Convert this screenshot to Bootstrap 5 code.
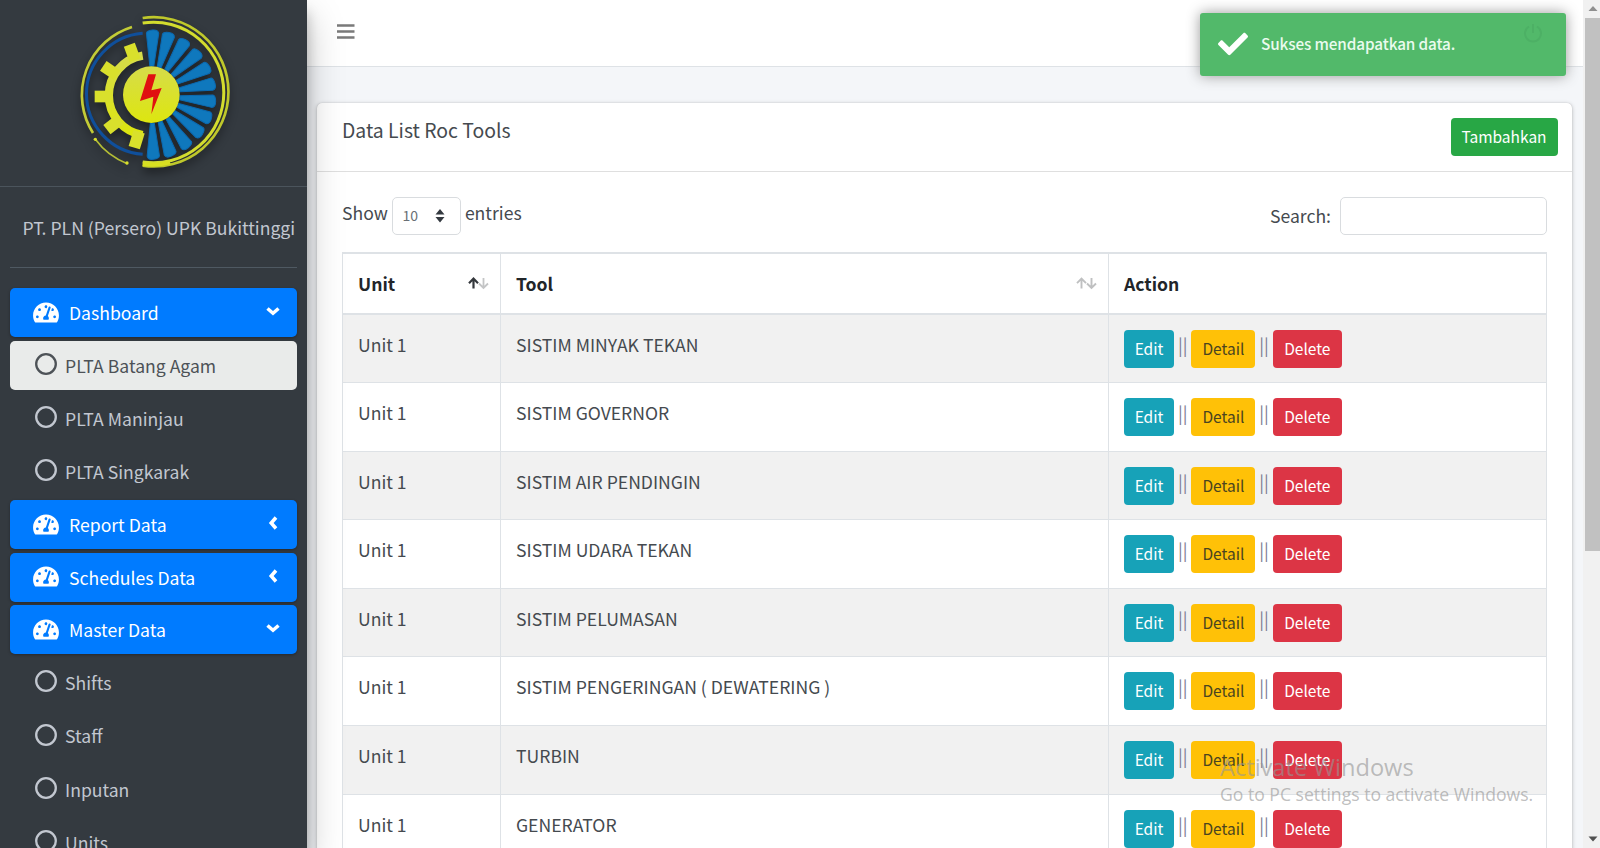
<!DOCTYPE html>
<html lang="id">
<head>
<meta charset="utf-8">
<meta name="viewport" content="width=device-width, initial-scale=1">
<title>Data List Roc Tools</title>
<link href="https://cdn.jsdelivr.net/npm/bootstrap@5.3.0/dist/css/bootstrap.min.css" rel="stylesheet">
<style>
body{height:848px;overflow:hidden;background:#f4f6f9;color:#454a4f;font-family:"Noto Sans CJK SC","Source Sans Pro",sans-serif;font-size:17.6px;line-height:29.5px}
.shell{height:848px;overflow:hidden}
.side{width:307px;background:#343a40;color:#c2c7d0;box-shadow:0 17px 34px rgba(0,0,0,.25),0 12px 12px rgba(0,0,0,.22);z-index:3;position:relative}
.brand-box{height:187px;border-bottom:1px solid #4b545c;padding:10px 0 0 70px}
.brand-box svg{filter:drop-shadow(0 5px 5px rgba(0,0,0,.45))}
.org{height:81px;margin:0 10px;border-bottom:1px solid #4f5962;padding:0 0 0 12.5px;line-height:81px;white-space:nowrap}
.menu{padding:20px 10px 0;display:flex;flex-direction:column}
.menu a{height:49px;margin-bottom:4.2px;border-radius:5px;color:#c2c7d0;text-decoration:none;display:flex;align-items:center;flex-shrink:0;padding:1px 0 0 24.5px}
.menu a.top{margin-bottom:3.6px;background:#007bff;color:#fff;padding:0 17px 0 23px;box-shadow:0 1px 3px rgba(0,0,0,.3)}
.menu a.top .tach{width:26px;height:23px;margin-right:10px;margin-top:-1px}
.menu a.top .arr{margin-left:auto;margin-top:-3px}
.menu a.on{background:#e9ebea;color:#4d5257}
.menu a .ring{width:22px;height:22px;margin-right:8.5px;margin-top:-3px}
.topbar{height:67px;background:#fff;border-bottom:1px solid #dee2e6;padding:24px 0 0 30px}
.panel{margin:36px 11px 0 10px;background:#fff;border-radius:5px 5px 0 0;box-shadow:0 0 1px rgba(0,0,0,.2),0 1px 4px rgba(0,0,0,.25);height:900px}
.panel-head{height:68.5px;border-bottom:1px solid #dfdfdf;padding:15px 14.5px 0 25px}
.panel-head h3{font-size:19.4px;line-height:26px;margin:-1px 0 0;font-weight:400}
.b{font-size:15.5px;line-height:24px;height:38px;padding:6px 0 8px;border-radius:4px;border:0;color:#fff;text-align:center}
.b-ok{background:#28a745;width:107px}
.b-edit{background:#17a2b8;width:50px}
.b-det{background:#ffc107;color:#4a4420;width:64px}
.b-del{background:#dc3545;width:69px}
.tools{height:80px;padding:25px 25px 0}
.len{width:69px;height:38px;border:1.5px solid #d9dcdf;border-radius:5px;margin:0 3.5px 0 4.5px;padding:0 15px 0 9px;font-size:14px;color:#6a7075}
.lbl{margin-top:1.5px}
.seek{width:207px;height:38px;border:1.5px solid #d9dcdf;border-radius:5px;margin-left:9px}
.grid-wrap{padding:0 25px}
.roc{width:1204px;table-layout:fixed;--bs-table-color:#454a4f;--bs-table-striped-color:#454a4f;--bs-table-striped-bg:#f1f1f1;border-color:#dee2e6;margin:0}
.roc th,.roc td{padding:15px 15px 0!important;vertical-align:top}
.roc thead th{height:61.5px;color:#212529;font-weight:700;border-top-width:2px;border-bottom:2px solid #dee2e6}
.roc tbody td{height:68.6px}
.roc .srt{margin-right:-4px}
.acts{height:38px}
.pipe{width:17.4px;text-align:center;color:#7c7d92}
.toast-ok{position:absolute;left:1199.5px;top:12.5px;width:366px;height:63px;background:#52b96a;border-radius:3px;box-shadow:0 0 14px #999;z-index:6;color:#eafbee;padding-left:18px;font-size:15.3px;font-weight:500;letter-spacing:-.12px}
.toast-ok .msg{margin-left:13.500px}
.toast-ok .pw{position:absolute;right:22px;top:9px}
.mark-win{position:absolute;left:1220px;top:750.5px;z-index:7;color:rgba(150,150,150,.62);font-family:"Open Sans","Noto Sans",sans-serif;white-space:nowrap}
.mark-win .w1{font-size:23.6px;line-height:32px}
.mark-win .w2{font-size:17.6px;line-height:23px}
.sbar{width:18px;background:#f1f1f1;padding:0 0 0 2px}
.sbar .up{height:18px}
.sbar .thumb{height:533px;background:#c1c1c1}
</style>
</head>
<body>
<svg width="0" height="0" class="position-absolute">
<defs>
<symbol id="tach" viewBox="0 0 576 512"><path fill="currentColor" d="M288 32C128.94 32 0 160.94 0 320c0 52.8 14.25 102.26 39.06 144.8 5.61 9.62 16.3 15.2 27.44 15.2h443c11.14 0 21.83-5.58 27.44-15.2C561.75 422.26 576 372.8 576 320c0-159.06-128.94-288-288-288zm0 64c14.71 0 26.58 10.13 30.32 23.65-1.11 2.26-2.64 4.23-3.45 6.67l-9.22 27.67c-5.13 3.49-10.97 6.01-17.64 6.01-17.67 0-32-14.33-32-32S270.33 96 288 96zM96 384c-17.67 0-32-14.33-32-32s14.33-32 32-32 32 14.33 32 32-14.33 32-32 32zm48-160c-17.67 0-32-14.33-32-32s14.33-32 32-32 32 14.33 32 32-14.33 32-32 32zm246.77-72.41l-61.33 184C343.13 347.33 352 364.54 352 384c0 11.72-3.38 22.55-8.88 32H232.88c-5.5-9.45-8.88-20.28-8.88-32 0-33.94 26.5-61.43 59.9-63.59l61.34-184.01c4.17-12.56 17.73-19.45 30.36-15.17 12.57 4.19 19.35 17.79 15.17 30.36zm14.66 57.2l15.52-46.55c3.47-1.29 7.13-2.23 11.05-2.23 17.67 0 32 14.33 32 32s-14.33 32-32 32c-11.38-.01-20.89-6.28-26.57-15.22zM480 384c-17.67 0-32-14.33-32-32s14.33-32 32-32 32 14.33 32 32-14.33 32-32 32z"/></symbol>
<symbol id="ring" viewBox="0 0 22 22"><circle cx="11" cy="11" r="9.8" fill="none" stroke="currentColor" stroke-width="2.3"/></symbol>
<symbol id="down" viewBox="0 0 14 14"><path d="M1.500 4.500 7 9.300l5.500-4.800" fill="none" stroke="currentColor" stroke-width="3.500"/></symbol>
<symbol id="left" viewBox="0 0 14 14"><path d="M10 1.500 5.200 7 10 12.500" fill="none" stroke="currentColor" stroke-width="3.500"/></symbol>
<symbol id="blade" viewBox="0 0 510 495" overflow="visible"><path d="M330 248 428 236Q436 237 438 254T428 273L330 260Z" stroke-linejoin="round" stroke-width="3" stroke="#0b6ab2" fill="#0f78bd"/></symbol>
<linearGradient id="gy" x1="0" y1="0" x2="0" y2="1"><stop offset="0" stop-color="#d6dc4a"/><stop offset="1" stop-color="#dde60f"/></linearGradient>
</defs>
</svg>
<div class="shell d-flex">
<aside class="side flex-shrink-0">
<div class="brand-box">
<svg class="d-block" width="170" height="165" viewBox="0 0 510 495" overflow="visible">
<g fill="none">
<path d="M218 24A224 224 0 1 1 218 467" stroke="#bfc82b" stroke-width="8"/>
<path d="M218 39A211 211 0 1 1 218 456" stroke="#d3dc2e" stroke-width="9"/>
<path d="M218 462Q262 468 300 457" stroke="#d8e021" stroke-width="12"/>
<path d="M186 51A213 213 0 0 0 69 369" stroke="#c3cc36" stroke-width="8"/>
<path d="M76 388A213 213 0 0 0 172 461" stroke="#b3bd35" stroke-width="5"/>
<path d="M218 70A182 182 0 0 0 218 433" stroke="#0f4f9b" stroke-width="9"/>
<path d="M218 137A120.500 120.500 0 0 0 218 375" stroke="url(#gy)" stroke-width="25"/>
</g>
<g fill="#d9e02c">
<circle cx="76" cy="388" r="5"/><circle cx="171" cy="459" r="5"/>
<path id="tooth" d="M74 242H124V277H74Z"/>
<use href="#tooth" transform="rotate(34 237 256)"/><use href="#tooth" transform="rotate(70 237 256)"/>
<use href="#tooth" transform="rotate(-38 237 256)"/><use href="#tooth" transform="rotate(-73 237 256)"/>
</g>
<g>
<use href="#blade" width="510" height="495" transform="rotate(-89 244 254)"/><use href="#blade" width="510" height="495" transform="rotate(-74 244 254)"/>
<use href="#blade" width="510" height="495" transform="rotate(-58 244 254)"/><use href="#blade" width="510" height="495" transform="rotate(-42 244 254)"/>
<use href="#blade" width="510" height="495" transform="rotate(-26 244 254)"/><use href="#blade" width="510" height="495" transform="rotate(-10 244 254)"/>
<use href="#blade" width="510" height="495" transform="rotate(6 244 254)"/><use href="#blade" width="510" height="495" transform="rotate(22 244 254)"/>
<use href="#blade" width="510" height="495" transform="rotate(38 244 254)"/><use href="#blade" width="510" height="495" transform="rotate(55 244 254)"/>
<use href="#blade" width="510" height="495" transform="rotate(72 244 254)"/><use href="#blade" width="510" height="495" transform="rotate(88 244 254)"/>
</g>
<circle cx="244" cy="254" r="85" fill="url(#gy)"/>
<path d="M235 193H258L244 241 275 234 244 313 250 260 210 273Z" fill="#e01010"/>
</svg>
</div>
<div class="org">PT. PLN (Persero) UPK Bukittinggi</div>
<nav class="menu">
<a class="top" href="#"><svg class="tach"><use href="#tach"/></svg>Dashboard<svg class="arr" width="14" height="14"><use href="#down"/></svg></a>
<a class="on" href="#"><svg class="ring"><use href="#ring"/></svg>PLTA Batang Agam</a>
<a href="#"><svg class="ring"><use href="#ring"/></svg>PLTA Maninjau</a>
<a href="#"><svg class="ring"><use href="#ring"/></svg>PLTA Singkarak</a>
<a class="top" href="#"><svg class="tach"><use href="#tach"/></svg>Report Data<svg class="arr" width="14" height="14"><use href="#left"/></svg></a>
<a class="top" href="#"><svg class="tach"><use href="#tach"/></svg>Schedules Data<svg class="arr" width="14" height="14"><use href="#left"/></svg></a>
<a class="top" href="#"><svg class="tach"><use href="#tach"/></svg>Master Data<svg class="arr" width="14" height="14"><use href="#down"/></svg></a>
<a href="#"><svg class="ring"><use href="#ring"/></svg>Shifts</a>
<a href="#"><svg class="ring"><use href="#ring"/></svg>Staff</a>
<a href="#"><svg class="ring"><use href="#ring"/></svg>Inputan</a>
<a href="#"><svg class="ring"><use href="#ring"/></svg>Units</a>
</nav>
</aside>
<main class="flex-grow-1">
<header class="topbar"><svg class="d-block" width="18" height="16" viewBox="0 0 18 16"><path d="M0 1.500H17.500M0 7.500H17.500M0 13.500H17.500" stroke="#7a7a7a" stroke-width="2.400"/></svg></header>
<section class="panel">
<div class="panel-head d-flex justify-content-between align-items-start"><h3>Data List Roc Tools</h3><button class="b b-ok">Tambahkan</button></div>
<div class="tools d-flex justify-content-between align-items-start">
<div class="d-flex align-items-start"><span class="lbl">Show</span><div class="len d-flex align-items-center justify-content-between"><span>10</span><svg width="10" height="14" viewBox="0 0 10 14"><path d="M5 0 9.500 5.500H.5ZM5 13.500.5 8H9.500Z" fill="#343a40"/></svg></div><span class="lbl">entries</span></div>
<div class="d-flex align-items-center"><span>Search:</span><div class="seek"></div></div>
</div>
<div class="grid-wrap">
<table class="table table-bordered table-striped roc">
<colgroup><col width="158"><col width="608"><col width="438"></colgroup>
<thead><tr>
<th><div class="d-flex justify-content-between align-items-center">Unit<svg class="srt" width="21" height="13" viewBox="0 0 21 13"><g fill="none" stroke-width="1.800"><path d="M15.500 1V10.500M11 6.500l4.500 4.500L20 6.500" stroke="#c4c5c6"/><path d="M5.500 11.500V2M1 6.200l4.500-4.600L10 6.200" stroke="#34383c" stroke-width="2.200"/></g></svg></div></th>
<th><div class="d-flex justify-content-between align-items-center">Tool<svg class="srt" width="21" height="13" viewBox="0 0 21 13"><g fill="none" stroke-width="1.900" stroke="#bfc0c1"><path d="M15.500 1V10.500M11 6.500l4.500 4.500L20 6.500M5.500 11.500V2M1 6.200l4.500-4.600L10 6.200"/></g></svg></div></th>
<th>Action</th></tr></thead>
<tbody>
<tr><td>Unit 1</td><td>SISTIM MINYAK TEKAN</td><td><div class="acts d-flex"><button class="b b-edit">Edit</button><span class="pipe">||</span><button class="b b-det">Detail</button><span class="pipe">||</span><button class="b b-del">Delete</button></div></td></tr>
<tr><td>Unit 1</td><td>SISTIM GOVERNOR</td><td><div class="acts d-flex"><button class="b b-edit">Edit</button><span class="pipe">||</span><button class="b b-det">Detail</button><span class="pipe">||</span><button class="b b-del">Delete</button></div></td></tr>
<tr><td>Unit 1</td><td>SISTIM AIR PENDINGIN</td><td><div class="acts d-flex"><button class="b b-edit">Edit</button><span class="pipe">||</span><button class="b b-det">Detail</button><span class="pipe">||</span><button class="b b-del">Delete</button></div></td></tr>
<tr><td>Unit 1</td><td>SISTIM UDARA TEKAN</td><td><div class="acts d-flex"><button class="b b-edit">Edit</button><span class="pipe">||</span><button class="b b-det">Detail</button><span class="pipe">||</span><button class="b b-del">Delete</button></div></td></tr>
<tr><td>Unit 1</td><td>SISTIM PELUMASAN</td><td><div class="acts d-flex"><button class="b b-edit">Edit</button><span class="pipe">||</span><button class="b b-det">Detail</button><span class="pipe">||</span><button class="b b-del">Delete</button></div></td></tr>
<tr><td>Unit 1</td><td>SISTIM PENGERINGAN ( DEWATERING )</td><td><div class="acts d-flex"><button class="b b-edit">Edit</button><span class="pipe">||</span><button class="b b-det">Detail</button><span class="pipe">||</span><button class="b b-del">Delete</button></div></td></tr>
<tr><td>Unit 1</td><td>TURBIN</td><td><div class="acts d-flex"><button class="b b-edit">Edit</button><span class="pipe">||</span><button class="b b-det">Detail</button><span class="pipe">||</span><button class="b b-del">Delete</button></div></td></tr>
<tr><td>Unit 1</td><td>GENERATOR</td><td><div class="acts d-flex"><button class="b b-edit">Edit</button><span class="pipe">||</span><button class="b b-det">Detail</button><span class="pipe">||</span><button class="b b-del">Delete</button></div></td></tr>
</tbody></table>
</div>
</section>
</main>
<div class="sbar flex-shrink-0 d-flex flex-column">
<svg class="up" width="16" viewBox="0 0 16 18"><path d="M3.500 11 8 6l4.500 5Z" fill="#8f8f8f"/></svg>
<div class="thumb"></div>
<svg class="mt-auto" width="16" height="18" viewBox="0 0 16 18"><path d="M3.500 6.500 8 11.500l4.500-5Z" fill="#505050"/></svg>
</div>
</div>
<div class="toast-ok d-flex align-items-center"><svg width="30" height="30" viewBox="0 0 512 512"><path fill="#fff" d="M173.898 439.404l-166.400-166.400c-9.997-9.997-9.997-26.206 0-36.204l36.203-36.204c9.997-9.998 26.207-9.998 36.204 0L192 312.690 432.095 72.596c9.997-9.997 26.207-9.997 36.204 0l36.203 36.204c9.997 9.997 9.997 26.206 0 36.204l-294.400 294.401c-9.998 9.997-26.207 9.997-36.204-.001z"/></svg><span class="msg">Sukses mendapatkan data.</span>
<svg class="pw" width="22" height="22" viewBox="0 0 22 22"><path d="M7 4.500A8 8 0 1 0 15 4.500M11 2V11" fill="none" stroke="#4db065" stroke-width="2"/></svg></div>
<div class="mark-win"><div class="w1">Activate Windows</div><div class="w2">Go to PC settings to activate Windows.</div></div>
<script src="https://cdn.jsdelivr.net/npm/bootstrap@5.3.0/dist/js/bootstrap.bundle.min.js"></script>
</body>
</html>
